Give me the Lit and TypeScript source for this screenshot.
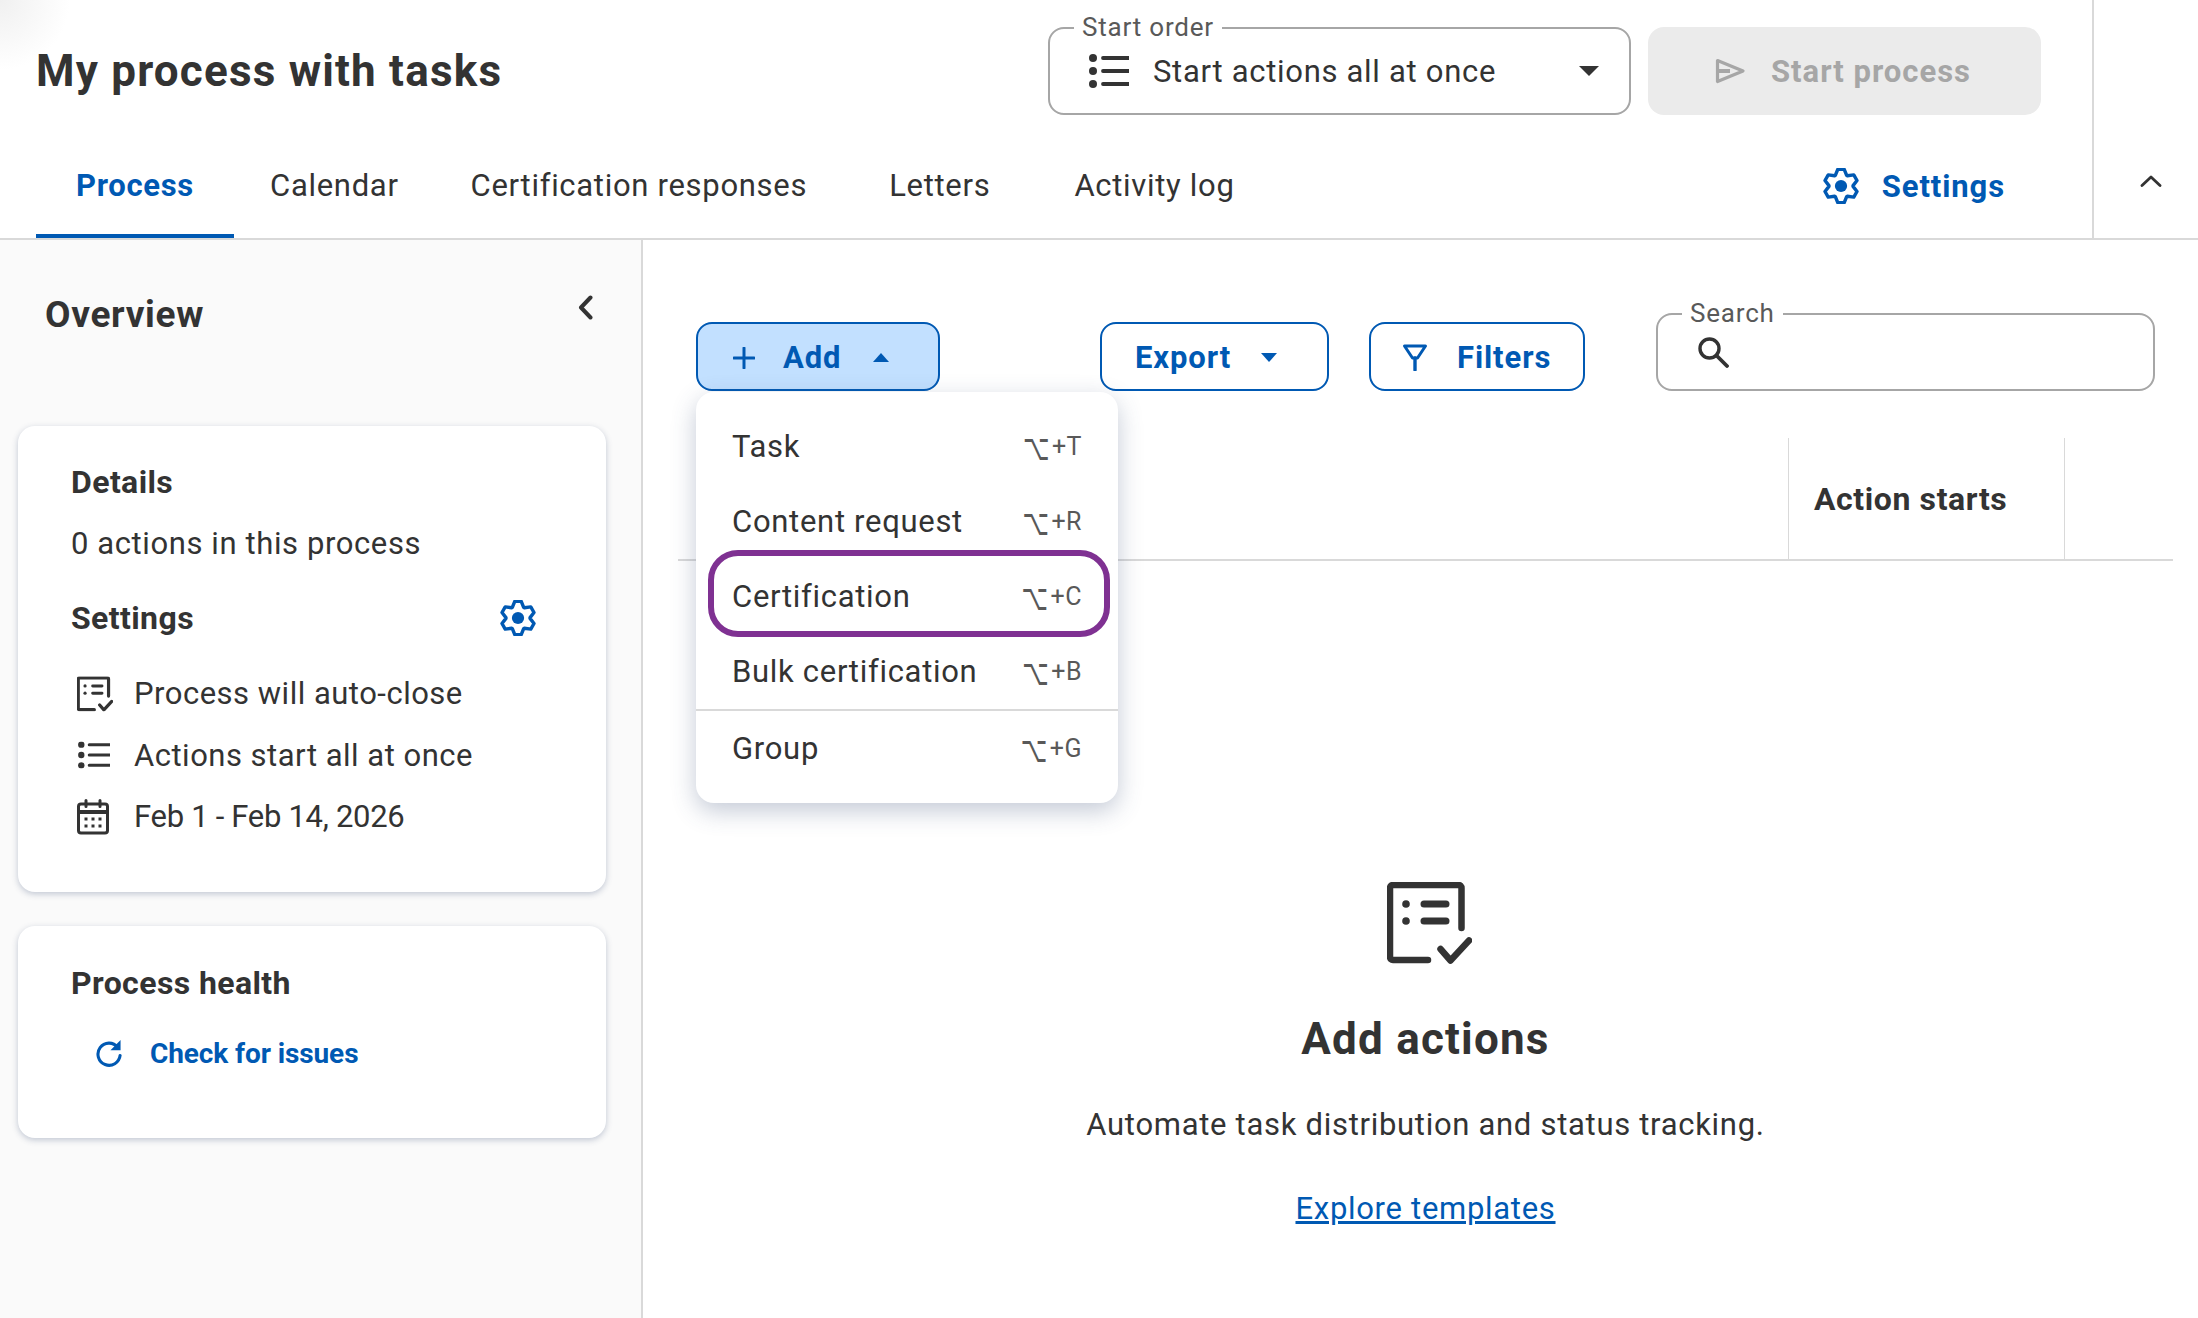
import { LitElement, html, css, svg } from 'lit';
import { customElement } from 'lit/decorators.js';

// six toothed gear outline, same shape is used in the tabs and the details card
const gearPath = () => {
  const pt = (r: number, deg: number) => {
    const a = (deg * Math.PI) / 180;
    return `${(20 + r * Math.cos(a)).toFixed(2)} ${(20 + r * Math.sin(a)).toFixed(2)}`;
  };
  const parts: string[] = [];
  for (let i = 0; i < 6; i++) {
    const c = -90 + i * 60;
    parts.push(pt(13.4, c - 28), pt(18.8, c - 11), pt(18.8, c + 11), pt(13.4, c + 28));
  }
  return 'M' + parts.join('L') + 'Z';
};

const gear = svg`<path d=${gearPath()} fill="none" stroke="currentColor" stroke-width="3.800" stroke-linejoin="round"/><circle cx="20" cy="20" r="6.800" fill="currentColor"/>`;
const listIcon = svg`<circle cx="4" cy="4" r="4" fill="currentColor"/><circle cx="4" cy="17" r="4" fill="currentColor"/><circle cx="4" cy="30" r="4" fill="currentColor"/><path d="M14 4h26M14 17h26M14 30h26" stroke="currentColor" stroke-width="3.800" stroke-linecap="round" fill="none"/>`;
const docCheck = svg`<path class="s" d="M74.500 46V6a3 3 0 0 0-3-3H6a3 3 0 0 0-3 3v69a3 3 0 0 0 3 3h35" fill="none" stroke="currentColor" stroke-linecap="round"/><circle cx="19" cy="22" r="3.800" fill="currentColor"/><circle cx="19" cy="39" r="3.800" fill="currentColor"/><path d="M37 22h22M37 39h22" fill="none" stroke="currentColor" stroke-width="7" stroke-linecap="round"/><path class="s" d="M53.500 67l10 11.500 18.500-20" fill="none" stroke="currentColor" stroke-linecap="round" stroke-linejoin="round"/>`;

@customElement('app-root')
class AppRoot extends LitElement {
  private _tabs = ['Process', 'Calendar', 'Certification responses', 'Letters', 'Activity log'];
  private _menu = [
    { label: 'Task', key: 'T' },
    { label: 'Content request', key: 'R' },
    { label: 'Certification', key: 'C', marked: true },
    { label: 'Bulk certification', key: 'B' },
  ];

  render() {
    return html`
      <div class="top">
        <div class="top-main">
          <div class="title-row">
            <h1>My process with tasks</h1>
            <div class="select">
              <span class="legend">Start order</span>
              <svg class="sel-icon" viewBox="0 0 40 34">${listIcon}</svg>
              <span class="sel-text">Start actions all at once</span>
              <svg class="sel-caret" viewBox="0 0 20 10"><path d="M0 0h20L10 10z" fill="currentColor"/></svg>
            </div>
            <div class="start">
              <svg viewBox="0 0 31 26"><path d="M2.500 2.500L28 13 2.500 23.500z" fill="none" stroke="currentColor" stroke-width="3.200" stroke-linejoin="round"/><path d="M2.500 13H15" stroke="currentColor" stroke-width="4"/></svg>
              Start process
            </div>
          </div>
          <div class="tabs">
            ${this._tabs.map((t, i) => html`<div class="tab t${i}">${t}</div>`)}
            <div class="tab-settings">
              <svg viewBox="0 0 40 40">${gear}</svg>
              Settings
            </div>
          </div>
        </div>
        <div class="collapse">
          <svg viewBox="0 0 22 12"><path d="M2 10.500L11 2l9 8.500" fill="none" stroke="currentColor" stroke-width="2.800" stroke-linecap="round" stroke-linejoin="round"/></svg>
        </div>
      </div>

      <div class="body">
        <aside>
          <div class="ov-row">
            <h2>Overview</h2>
            <svg viewBox="0 0 15 25"><path d="M12.500 2.500L3 12.500l9.500 10" fill="none" stroke="currentColor" stroke-width="4" stroke-linecap="round" stroke-linejoin="round"/></svg>
          </div>
          <section class="card details">
            <div class="c-title">Details</div>
            <div class="c-line">0 actions in this process</div>
            <div class="c-title set">
              Settings
              <svg viewBox="0 0 40 40">${gear}</svg>
            </div>
            <div class="row">
              <svg class="doc" viewBox="0 0 85 82">${docCheck}</svg>
              Process will auto-close
            </div>
            <div class="row">
              <svg class="lst" viewBox="0 0 40 34">${listIcon}</svg>
              Actions start all at once
            </div>
            <div class="row date">
              <svg class="cal" viewBox="0 0 32 36"><rect x="1.500" y="5" width="29" height="29" rx="2.500" fill="none" stroke="currentColor" stroke-width="3"/><path d="M1.500 13h29" stroke="currentColor" stroke-width="4"/><path d="M9 1.500v6M23 1.500v6" stroke="currentColor" stroke-width="3" stroke-linecap="round"/><path d="M7.500 20h3M14.500 20h3M21.500 20h3M7.500 27h3M14.500 27h3M21.500 27h3" stroke="currentColor" stroke-width="3"/></svg>
              Feb 1 - Feb 14, 2026
            </div>
          </section>
          <section class="card health">
            <div class="c-title">Process health</div>
            <div class="check">
              <svg viewBox="0 0 28 28"><path d="M22.500 7.500A11.500 11.500 0 1 0 25 16" fill="none" stroke="currentColor" stroke-width="3.200" stroke-linecap="round"/><path d="M25.500 0v10.500H15z" fill="currentColor"/></svg>
              Check for issues
            </div>
          </section>
        </aside>

        <main>
          <div class="toolbar">
            <div class="btn add">
              <svg class="plus" viewBox="0 0 22 22"><path d="M11 1v20M1 11h20" stroke="currentColor" stroke-width="3" stroke-linecap="round"/></svg>
              Add
              <svg class="caret" viewBox="0 0 16 9"><path d="M0 9L8 0l8 9z" fill="currentColor"/></svg>
            </div>
            <div class="btn export">
              Export
              <svg class="caret" viewBox="0 0 16 9"><path d="M0 0h16L8 9z" fill="currentColor"/></svg>
            </div>
            <div class="btn filters">
              <svg class="funnel" viewBox="0 0 26 27"><path d="M2.500 2H23.500L15.500 14H10.500z" fill="none" stroke="currentColor" stroke-width="3" stroke-linejoin="round"/><path d="M13 14v12" stroke="currentColor" stroke-width="3.400" stroke-linecap="round"/></svg>
              Filters
            </div>
            <div class="search">
              <span class="legend">Search</span>
              <svg viewBox="0 0 32 32"><circle cx="12.500" cy="12.500" r="9.500" fill="none" stroke="currentColor" stroke-width="3.400"/><path d="M19.500 19.500L30 30" stroke="currentColor" stroke-width="3.800" stroke-linecap="round"/></svg>
            </div>
          </div>

          <div class="table">
            <div class="thead">
              <div class="th">Action starts</div>
            </div>
            <div class="empty">
              <svg viewBox="0 0 85 82">${docCheck}</svg>
              <h3>Add actions</h3>
              <p>Automate task distribution and status tracking.</p>
              <a>Explore templates</a>
            </div>
          </div>

          <div class="menu">
            ${this._menu.map(m => html`
              <div class="item ${m.marked ? 'marked' : ''}">
                <span>${m.label}</span><span class="key"><span class="sym">⌥</span>+${m.key}</span>
              </div>
            `)}
            <div class="divider"></div>
            <div class="item"><span>Group</span><span class="key"><span class="sym">⌥</span>+G</span></div>
          </div>
        </main>
      </div>
    `;
  }

  static styles = css`
    :host {
      display: block;
      width: 2198px;
      height: 1318px;
      overflow: hidden;
      background: #fff;
      color: #333;
      font-family: Roboto, Arial, sans-serif;
      font-size: 31px;
      letter-spacing: 0.7px;
    }

    svg {
      display: block;
      flex: none;
    }

    .s {
      stroke-width: 6.5;
    }

    .top {
      display: flex;
      height: 240px;
      border-bottom: 2px solid #d9d9d9;
      box-sizing: border-box;
      background: radial-gradient(circle at 0 0, #f0f0f0, rgba(255, 255, 255, 0) 70px);
    }

    .top-main {
      width: 2092px;
      display: flex;
      flex-direction: column;
    }

    .title-row {
      display: flex;
      align-items: center;
      height: 88px;
      margin-top: 27px;
      padding: 0 51px 0 36px;
    }

    h1 {
      flex: 1;
      margin: 0;
      font-size: 44px;
      letter-spacing: 1.2px;
      font-weight: 700;
    }

    .select {
      position: relative;
      width: 583px;
      height: 88px;
      box-sizing: border-box;
      display: flex;
      align-items: center;
      border: 2px solid #a6a6a6;
      border-radius: 16px;
      padding: 0 30px 0 39px;
    }

    .legend {
      position: absolute;
      top: -16px;
      left: 24px;
      padding: 0 8px;
      background: #fff;
      font-size: 26px;
      line-height: 28px;
      letter-spacing: 0.8px;
      color: #595959;
    }

    .sel-icon {
      width: 40px;
      height: 34px;
    }

    .sel-text {
      flex: 1;
      margin-left: 24px;
    }

    .sel-caret {
      width: 20px;
      height: 10px;
    }

    .start {
      width: 393px;
      height: 88px;
      margin-left: 17px;
      box-sizing: border-box;
      display: flex;
      align-items: center;
      padding-left: 67px;
      gap: 25px;
      background: #ebebeb;
      border-radius: 16px;
      color: #a6a6a6;
      font-weight: 700;
      letter-spacing: 1px;
    }

    .start svg {
      width: 31px;
      height: 26px;
    }

    .tabs {
      display: flex;
      flex: 1;
      padding-left: 36px;
    }

    .tab {
      display: flex;
      align-items: center;
      padding: 21px 36px 0;
      box-sizing: border-box;
      height: 123px;
      border-bottom: 4px solid transparent;
    }

    .t0 {
      width: 198px;
      padding: 21px 0 0;
      justify-content: center;
      color: #0059b3;
      font-weight: 700;
      border-bottom-color: #0059b3;
    }

    .t2 {
      margin-right: 10px;
    }

    .t3 {
      margin-right: 12px;
    }

    .tab-settings {
      display: flex;
      align-items: center;
      gap: 23px;
      margin-left: auto;
      margin-right: 87px;
      padding-top: 16px;
      height: 110px;
      color: #0059b3;
      font-weight: 700;
      letter-spacing: 0.9px;
    }

    .tab-settings svg {
      width: 36px;
      height: 36px;
    }

    .collapse {
      flex: 1;
      border-left: 2px solid #d9d9d9;
      padding: 175px 0 0 46px;
    }

    .collapse svg {
      width: 22px;
      height: 12px;
    }

    .body {
      display: flex;
      height: 1078px;
    }

    aside {
      width: 643px;
      box-sizing: border-box;
      background: #fafafa;
      border-right: 2px solid #d9d9d9;
      padding-left: 18px;
    }

    .ov-row {
      display: flex;
      align-items: center;
      justify-content: space-between;
      height: 74px;
      margin: 37px 48px 75px 27px;
    }

    h2 {
      margin: 0;
      font-size: 37px;
      letter-spacing: 0.7px;
      font-weight: 700;
    }

    .ov-row svg {
      width: 15px;
      height: 25px;
      margin-top: -14px;
    }

    .card {
      width: 588px;
      box-sizing: border-box;
      background: #fff;
      border-radius: 17px;
      padding-left: 53px;
      box-shadow: 0 2px 6px rgba(60, 80, 120, 0.3);
    }

    .details {
      height: 466px;
      padding-top: 36px;
    }

    .health {
      height: 212px;
      margin-top: 34px;
      padding-top: 37px;
    }

    .c-title {
      font-size: 32px;
      font-weight: 700;
      line-height: 40px;
      letter-spacing: 0.4px;
    }

    .c-line {
      margin-top: 22px;
      line-height: 40px;
      letter-spacing: 0.6px;
    }

    .set {
      display: flex;
      align-items: center;
      justify-content: space-between;
      margin-top: 34px;
      padding-right: 70px;
    }

    .set svg {
      width: 36px;
      height: 36px;
      color: #0059b3;
    }

    .row {
      position: relative;
      display: flex;
      align-items: center;
      height: 61.500px;
      padding-left: 63px;
      letter-spacing: 0.5px;
    }

    .row.date {
      letter-spacing: -0.3px;
    }

    .details .set + .row {
      margin-top: 25px;
    }

    .row svg {
      position: absolute;
      left: 6px;
      top: 50%;
      transform: translateY(-50%);
    }

    .row .doc {
      width: 36px;
      height: 35px;
    }

    .row .doc .s {
      stroke-width: 7.5;
    }

    .row .lst {
      left: 7px;
      width: 32px;
      height: 27px;
    }

    .row .cal {
      width: 32px;
      height: 36px;
    }

    .check {
      display: flex;
      align-items: center;
      gap: 27px;
      margin: 34px 0 0 25px;
      font-size: 28px;
      letter-spacing: -0.1px;
      font-weight: 700;
      color: #0059b3;
    }

    .check svg {
      width: 27px;
      height: 27px;
    }

    main {
      position: relative;
      flex: 1;
    }

    .toolbar {
      display: flex;
      align-items: flex-end;
      padding: 73px 0 0 53px;
    }

    .btn {
      display: flex;
      align-items: center;
      height: 69px;
      box-sizing: border-box;
      padding-top: 2px;
      border: 2px solid #0059b3;
      border-radius: 16px;
      color: #0059b3;
      font-weight: 700;
      letter-spacing: 0.9px;
    }

    .add {
      width: 244px;
      padding-left: 35px;
      background: #c2e0ff;
    }

    .plus {
      width: 22px;
      height: 22px;
      margin-right: 28px;
    }

    .caret {
      width: 16px;
      height: 9px;
    }

    .add .caret {
      margin-left: 32px;
    }

    .export {
      width: 229px;
      margin-left: 160px;
      padding-left: 33px;
    }

    .export .caret {
      margin-left: 30px;
    }

    .filters {
      width: 216px;
      margin-left: 40px;
      padding-left: 31px;
    }

    .funnel {
      width: 26px;
      height: 27px;
      margin-right: 29px;
    }

    .search {
      position: relative;
      width: 499px;
      height: 78px;
      margin-left: 71px;
      box-sizing: border-box;
      border: 2px solid #a6a6a6;
      border-radius: 16px;
      padding: 21px 0 0 39px;
    }

    .search svg {
      width: 32px;
      height: 32px;
    }

    .table {
      margin: 47px 25px 0 35px;
    }

    .thead {
      display: flex;
      justify-content: flex-end;
      height: 123px;
      box-sizing: border-box;
      border-bottom: 2px solid #d9d9d9;
      padding-right: 108px;
    }

    .th {
      width: 277px;
      box-sizing: border-box;
      display: flex;
      align-items: center;
      padding-left: 25px;
      border-left: 1px solid #d9d9d9;
      border-right: 1px solid #d9d9d9;
      font-size: 32px;
      letter-spacing: 0.6px;
      font-weight: 700;
    }

    .empty {
      display: flex;
      flex-direction: column;
      align-items: center;
      padding-top: 321px;
    }

    .empty svg {
      width: 85px;
      height: 82px;
      margin-left: 8px;
    }

    h3 {
      margin: 47px 0 0;
      font-size: 44px;
      line-height: 56px;
      letter-spacing: 1.2px;
      font-weight: 700;
    }

    p {
      margin: 36px 0 0;
      line-height: 44px;
    }

    a {
      margin-top: 40px;
      line-height: 44px;
      color: #0059b3;
      text-decoration: underline;
    }

    .menu {
      position: absolute;
      left: 53px;
      top: 152px;
      width: 422px;
      height: 411px;
      box-sizing: border-box;
      padding-top: 17px;
      background: #fff;
      border-radius: 18px;
      box-shadow: 0 8px 24px rgba(60, 80, 120, 0.3);
    }

    .item {
      position: relative;
      display: flex;
      align-items: center;
      justify-content: space-between;
      height: 75px;
      padding: 0 36px;
    }

    .key {
      display: flex;
      align-items: center;
      font-size: 25px;
      letter-spacing: 0.5px;
      color: #595959;
    }

    .sym {
      display: inline-block;
      margin-right: 2px;
      font-family: 'DejaVu Sans', sans-serif;
      font-size: 23px;
      transform: scaleY(1.6);
    }

    .marked::after {
      content: '';
      position: absolute;
      left: 12px;
      right: 8px;
      top: -9px;
      bottom: -3px;
      border: 6px solid #7f3192;
      border-radius: 30px;
    }

    .divider {
      height: 2px;
      background: #d9d9d9;
    }
  `;
}

declare global {
  interface HTMLElementTagNameMap {
    'app-root': AppRoot;
  }
}
